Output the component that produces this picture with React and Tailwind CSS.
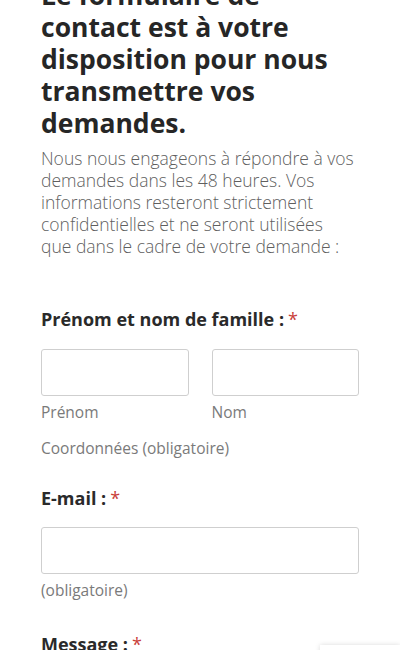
import React from 'react'

const Required = () => <span className="text-[#c9403a] font-normal ml-1">*</span>;

const Label = ({ children }) => (
  <label className="block text-[18px] leading-[24px] font-bold text-[#2a2a2a]">
    {children} :<Required />
  </label>
);

const Input = ({ className = '' }) => (
  <input
    type="text"
    className={`block h-[47px] rounded-[3px] border border-[#cfcfcf] bg-white ${className}`}
  />
);

const Hint = ({ className = '', children }) => (
  <div className={`text-[15.5px] leading-[20px] text-[#7a7a7a] ${className}`}>{children}</div>
);

const App = () => {
  return (
    <div className="min-h-[650px] bg-white overflow-hidden" style={{ fontFamily: '"Open Sans", sans-serif' }}>
      <div className="px-[41px]">
        <h1 className="mt-[-21px] text-[26.5px] leading-[32px] font-bold text-[#262626]">
          Le formulaire de contact est à votre disposition pour nous transmettre vos demandes.
        </h1>
        <p className="mt-[8px] mr-[3px] text-[17.5px] leading-[22px] font-light text-[#5f5f5f]">
          Nous nous engageons à répondre à vos demandes dans les 48 heures. Vos informations resteront strictement confidentielles et ne seront utilisées que dans le cadre de votre demande :
        </p>

        <form className="mt-[50px]">
          <Label>Prénom et nom de famille</Label>
          <div className="mt-[18px] flex gap-[23px]">
            <div className="flex-1">
              <Input className="w-full" />
              <Hint className="mt-[6px]">Prénom</Hint>
            </div>
            <div className="flex-1">
              <Input className="w-full" />
              <Hint className="mt-[6px]">Nom</Hint>
            </div>
          </div>
          <Hint className="mt-[16px]">Coordonnées (obligatoire)</Hint>

          <div className="mt-[28px]">
            <Label>E-mail</Label>
            <Input className="w-full mt-[17px]" />
            <Hint className="mt-[6px]">(obligatoire)</Hint>
          </div>

          <div className="mt-[32px]">
            <Label>Message</Label>
          </div>
        </form>
      </div>
      <div className="fixed right-0 bottom-[-70px] w-[80px] h-[75px] bg-white shadow-[0_0_5px_rgba(0,0,0,0.15)]" />
    </div>
  )
}

export default App
